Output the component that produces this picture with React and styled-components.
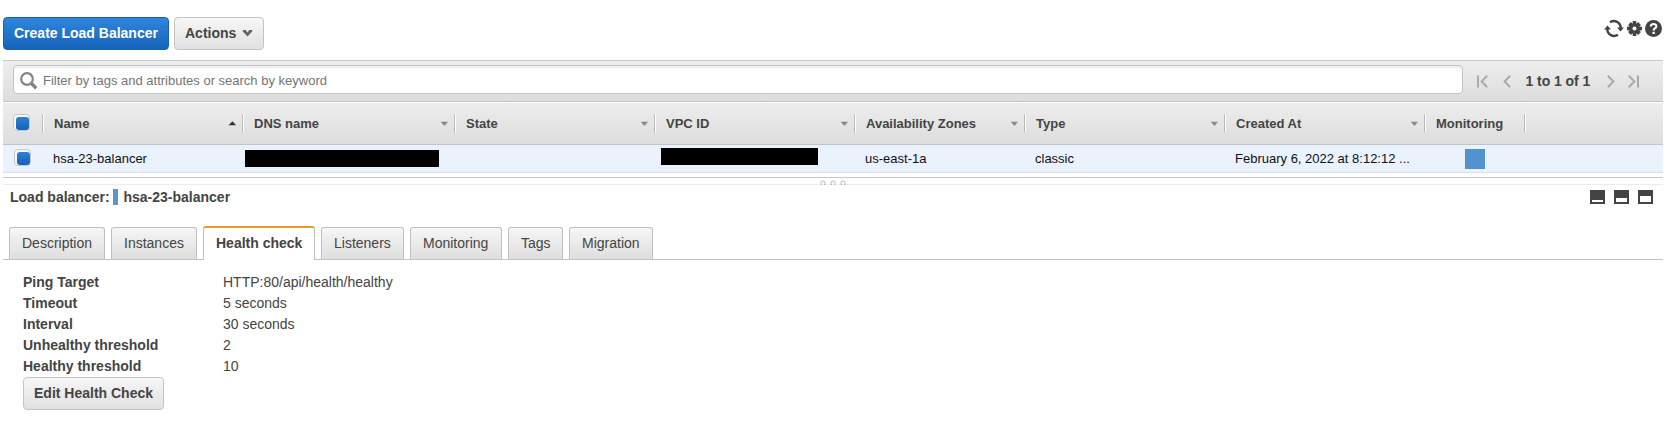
import React from 'react';
import styled, { createGlobalStyle, css } from 'styled-components';

const Global = createGlobalStyle`
  *, *::before, *::after { box-sizing: border-box; }
  body { margin: 0; background: #fff; }
`;

const Page = styled.div`
  width: 1673px;
  height: 431px;
  padding: 0 10px 0 3px;
  background: #fff;
  color: #444;
  font-family: "Liberation Sans", Arial, sans-serif;
  font-size: 14px;
  overflow: hidden;
`;

const Toolbar = styled.header`
  height: 60px;
  display: flex;
  align-items: flex-start;
  gap: 5px;
  padding-top: 17px;
`;

const Button = styled.button`
  display: flex;
  align-items: center;
  height: 33px;
  width: ${p => p.$width}px;
  padding: 0 0 1px 10px;
  border: 1px solid ${p => (p.$primary ? '#1a5fb0' : '#c4c4c4')};
  border-radius: 4px;
  background: ${p => (p.$primary ? 'linear-gradient(#2f86dd, #1763bb)' : 'linear-gradient(#f6f6f6, #e1e1e1)')};
  color: ${p => (p.$primary ? '#fff' : '#444')};
  font: bold 14px "Liberation Sans", Arial, sans-serif;
  white-space: nowrap;
  svg { margin: -1px 0 0 6px; }
`;

const ToolIcons = styled.div`
  display: flex;
  align-items: center;
  gap: 3px;
  margin: 2px 0 0 auto;
  padding-right: 1px;
  svg { display: block; }
`;

const FilterBar = styled.div`
  height: 42px;
  display: flex;
  align-items: flex-start;
  padding: 4px 0 0 10px;
  border-top: 1px solid #c8c8c8;
  border-bottom: 1px solid #c4c4c4;
  background: linear-gradient(#eee, #ddd);
`;

const SearchBox = styled.label`
  width: 1450px;
  height: 29px;
  display: flex;
  align-items: center;
  gap: 5px;
  padding: 1px 0 0 6px;
  border: 1px solid #c4c4c4;
  border-radius: 4px;
  background: #fff;
  box-shadow: inset 0 2px 2px #eee;
  svg { margin-top: 2px; }
`;

const SearchInput = styled.input`
  flex: 1;
  border: 0;
  padding: 0;
  outline: 0;
  background: none;
  font: 13px "Liberation Sans", Arial, sans-serif;
  &::placeholder { color: #757575; opacity: 1; }
`;

const Pager = styled.nav`
  display: flex;
  align-items: center;
  height: 30px;
  margin: 1px 0 0 13.5px;
  svg { display: block; }
`;

const PageCount = styled.span`
  width: 64px;
  margin: 0 17px 0 15px;
  font-size: 14px;
  font-weight: bold;
  letter-spacing: -0.05px;
  white-space: nowrap;
`;

const HeadRow = styled.div`
  display: flex;
  height: 43px;
  padding-top: 11px;
  border-top: 1px solid #fff;
  border-bottom: 1px solid #c4c4c4;
  background: linear-gradient(#ededed, #dddddd);
`;

const HeadCell = styled.div`
  width: ${p => p.$width}px;
  height: 19px;
  display: flex;
  align-items: center;
  justify-content: space-between;
  padding: 0 7px 0 10px;
  border-right: 1px solid #fff;
  box-shadow: inset -1px 0 #bbb;
  font-size: 13px;
  font-weight: bold;
  white-space: nowrap;
`;

const Row = styled.div`
  display: flex;
  height: 28px;
  background: #eaf2fe;
  border-bottom: 1px solid #dcdfe4;
  color: #111;
  font-size: 13px;
`;

const Cell = styled.div`
  width: ${p => p.$width}px;
  height: 27px;
  display: flex;
  align-items: center;
  padding-left: ${p => p.$pad ?? 9}px;
  white-space: nowrap;
`;

const Check = styled.span`
  width: 17px;
  height: 17px;
  flex: none;
  margin-top: -2px;
  padding: 2px 0 0 2px;
  border: 1px solid #c4c8cc;
  border-radius: 4px;
  background: #f6f8fa;
  &::before {
    content: '';
    display: block;
    width: 13px;
    height: 13px;
    border-radius: 3px;
    background: linear-gradient(#2c80d6, #1762b8);
  }
`;

const Redacted = styled.span`
  width: ${p => p.$width}px;
  height: 17px;
  margin-top: ${p => p.$shift || 0}px;
  background: #000;
`;

const Swatch = styled.span`
  width: 20px;
  height: 20px;
  margin-top: 1px;
  background: #5293cf;
`;

const Splitter = styled.div`
  height: 8px;
  margin-top: 4px;
  display: flex;
  justify-content: center;
  align-items: flex-end;
  border-top: 1px solid #c8c8c8;
  border-bottom: 1px solid #ececec;
  svg { display: block; margin-bottom: -1px; }
`;

const DetailHead = styled.div`
  height: 41px;
  display: flex;
  align-items: flex-start;
  padding: 4px 10px 0 7px;
  font-weight: bold;
  line-height: 16px;
`;

const Marker = styled.span`
  width: 5px;
  height: 16px;
  margin: 0 5.5px 0 4px;
  background: #5b95c9;
`;

const HeadLabel = styled.span`
  width: ${p => p.$width}px;
  white-space: nowrap;
`;

const PanelIcons = styled.div`
  display: flex;
  gap: 9px;
  margin: 1px 0 0 auto;
`;

const PanelIcon = styled.span`
  width: 15px;
  height: 14px;
  display: flex;
  align-items: flex-end;
  padding: 2px;
  background: #444;
  &::before {
    content: '';
    width: 11px;
    height: ${p => p.$open}px;
    background: #fff;
  }
`;

const Tabs = styled.div`
  display: flex;
  align-items: flex-end;
  gap: 6px;
  height: 34px;
  padding-left: 6px;
  border-bottom: 1px solid #c4c4c4;
`;

const Tab = styled.div`
  width: ${p => p.$width}px;
  height: 32px;
  padding: 0 0 1px 12px;
  display: flex;
  align-items: center;
  border: 1px solid #c0c0c0;
  border-bottom: 0;
  border-radius: 3px 3px 0 0;
  background: linear-gradient(#f6f6f6, #dedede);
  white-space: nowrap;
  ${p => p.$active && css`
    height: 34px;
    margin-bottom: -1px;
    padding-bottom: 2px;
    border-top: 2px solid #e69a28;
    background: #fff;
    font-weight: bold;
  `}
`;

const Details = styled.dl`
  display: grid;
  grid-template-columns: 200px auto;
  grid-auto-rows: 21px;
  margin: 0;
  padding: 12px 0 0 20px;
  line-height: 21px;
`;

const Term = styled.dt`
  font-weight: bold;
`;

const Value = styled.dd`
  margin: 0;
`;

const Footer = styled.div`
  padding-left: 20px;
`;

const columns = [
  ['Name', 200, 'up'], ['DNS name', 212, 'down'], ['State', 200, 'down'], ['VPC ID', 200, 'down'],
  ['Availability Zones', 170, 'down'], ['Type', 200, 'down'], ['Created At', 200, 'down'], ['Monitoring', 100, null],
];

const tabs = [
  ['Description', 96], ['Instances', 86], ['Health check', 112], ['Listeners', 83],
  ['Monitoring', 92], ['Tags', 55], ['Migration', 84],
];

const details = [
  ['Ping Target', 'HTTP:80/api/health/healthy'], ['Timeout', '5 seconds'], ['Interval', '30 seconds'],
  ['Unhealthy threshold', '2'], ['Healthy threshold', '10'],
];

const SortArrow = ({ dir }) => (
  <svg width="8" height="5" viewBox="0 0 8 5">
    {dir === 'up' ? <path d="M.5 4.3 4.5 .3 8 4.3Z" fill="#333" /> : <path d="M.8.8h7.2L4.400 5Z" fill="#888" />}
  </svg>
);

const Chevron = ({ flip, bar }) => (
  <svg width={bar ? 11 : 8} height="13" viewBox={bar ? '0 0 11 13' : '3 0 8 13'} fill="none" stroke="#aaa" strokeWidth="2">
    <g transform={flip ? `translate(${bar ? 11 : 14} 0) scale(-1 1)` : undefined}>
      {bar && <path d="M1 .5v12" />}
      <path d="M10.2.8 4.6 6.5l5.6 5.7" />
    </g>
  </svg>
);

const Refresh = () => (
  <svg width="20" height="19" viewBox="0 0 20 19">
    <g fill="none" stroke="#444" strokeWidth="2.4">
      <path d="M6 3.300C10.500 .4 16.700 3 16.700 9" />
      <path d="M14 15.700C9.500 18.600 3.300 16 3.300 10" />
    </g>
    <path d="M13 8.600H20l-3.500 4ZM0 10.400h7L3.500 6.400Z" fill="#444" />
  </svg>
);

const Gear = () => (
  <svg width="15" height="15" viewBox="0 0 15 15">
    <g fill="#444">
      <rect x="5.700" y="0" width="3.600" height="15" />
      <rect x="0" y="5.700" width="15" height="3.600" />
      <rect x="5.500" y=".4" width="4" height="14.200" transform="rotate(45 7.5 7.5)" />
      <rect x="5.500" y=".4" width="4" height="14.200" transform="rotate(135 7.5 7.5)" />
      <circle cx="7.500" cy="7.500" r="5.300" />
    </g>
    <circle cx="7.500" cy="7.500" r="2" fill="#fff" />
  </svg>
);

const Help = () => (
  <svg width="17" height="17" viewBox="0 0 17 17">
    <circle cx="8.5" cy="8.5" r="8.5" fill="#444" />
    <path d="M5.800 6.500C5.800 3.300 11.400 3.300 11.400 6.300 11.400 8.200 8.600 8.200 8.600 10.600" fill="none" stroke="#fff" strokeWidth="2.1" />
    <rect x="7.4" y="11.8" width="2.4" height="2.2" fill="#fff" />
  </svg>
);

export default function App() {
  return (
    <Page>
      <Global />
      <Toolbar>
        <Button $primary $width={166}>Create Load Balancer</Button>
        <Button $width={90}>
          Actions
          <svg width="11" height="8" viewBox="0 0 11 8"><path d="M.8 1h3L5.500 3.500 7.200 1h3v1.500L5.500 7.400.8 2.500Z" fill="#666" /></svg>
        </Button>
        <ToolIcons>
          <Refresh />
          <Gear />
          <Help />
        </ToolIcons>
      </Toolbar>

      <FilterBar>
        <SearchBox>
          <svg width="18" height="18" viewBox="0 0 18 18" fill="none" stroke="#858585">
            <circle cx="7" cy="7" r="5.8" strokeWidth="2.2" />
            <path d="m11 11 5.2 5.2" strokeWidth="3.4" />
          </svg>
          <SearchInput placeholder="Filter by tags and attributes or search by keyword" />
        </SearchBox>
        <Pager>
          <Chevron bar />
          <svg width="15" height="1" />
          <Chevron />
          <PageCount>1 to 1 of 1</PageCount>
          <Chevron flip />
          <svg width="13" height="1" />
          <Chevron flip bar />
        </Pager>
      </FilterBar>

      <HeadRow>
        <HeadCell $width={41}><Check /></HeadCell>
        {columns.map(([label, width, sort]) => (
          <HeadCell key={label} $width={width}>
            {label}
            {sort && <SortArrow dir={sort} />}
          </HeadCell>
        ))}
      </HeadRow>
      <Row>
        <Cell $width={41} $pad={11}><Check /></Cell>
        <Cell $width={198}>hsa-23-balancer</Cell>
        <Cell $width={214} $pad={3}><Redacted $width={194} /></Cell>
        <Cell $width={200} />
        <Cell $width={200} $pad={5}><Redacted $width={157} $shift={-4} /></Cell>
        <Cell $width={170}>us-east-1a</Cell>
        <Cell $width={200}>classic</Cell>
        <Cell $width={200}>February 6, 2022 at 8:12:12 ...</Cell>
        <Cell $width={100} $pad={39}><Swatch /></Cell>
      </Row>

      <Splitter>
        <svg width="26" height="5" viewBox="0 0 26 5" fill="none" stroke="#b5b5b5">
          <path d="M2 4.500H1V2.500Q1 1 3 1T5 2.500V4.500H4M12 4.500H11V2.500Q11 1 13 1T15 2.500V4.500H14M22 4.500H21V2.500Q21 1 23 1T25 2.500V4.500H24" />
        </svg>
      </Splitter>

      <DetailHead>
        <HeadLabel $width={99}>Load balancer:</HeadLabel>
        <Marker />
        <HeadLabel>hsa-23-balancer</HeadLabel>
        <PanelIcons>
          <PanelIcon $open={2} />
          <PanelIcon $open={4} />
          <PanelIcon $open={6} />
        </PanelIcons>
      </DetailHead>

      <Tabs>
        {tabs.map(([label, width]) => (
          <Tab key={label} $width={width} $active={label === 'Health check'}>{label}</Tab>
        ))}
      </Tabs>

      <Details>
        {details.map(([term, value]) => (
          <React.Fragment key={term}>
            <Term>{term}</Term>
            <Value>{value}</Value>
          </React.Fragment>
        ))}
      </Details>
      <Footer>
        <Button $width={141}>Edit Health Check</Button>
      </Footer>
    </Page>
  );
}
